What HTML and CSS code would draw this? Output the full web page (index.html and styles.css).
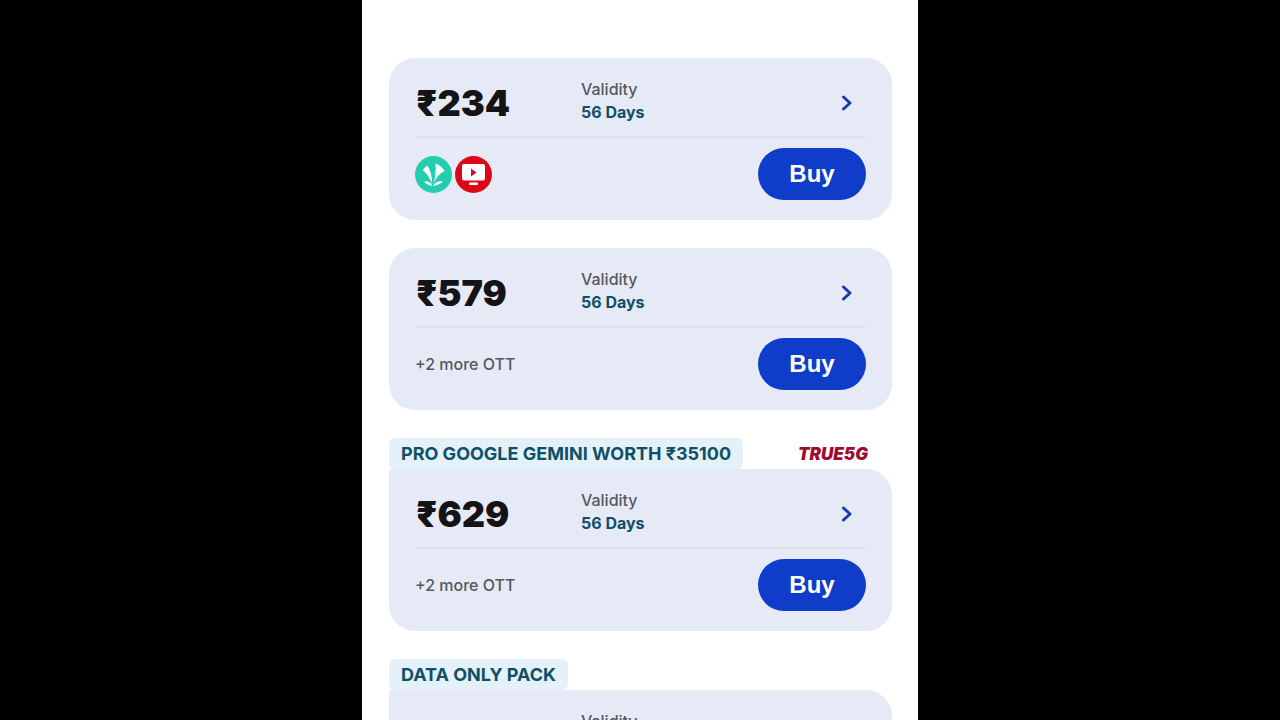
FILE: index.html
```html
<!DOCTYPE html>
<html lang="en">
<head>
    <meta charset="UTF-8">
    <meta name="viewport" content="width=device-width, initial-scale=1.0">
    <title>Recharge Plans</title>
    <link rel="stylesheet" href="styles.css">
</head>
<body>
    <main class="plans">
        <section class="plan">
            <div class="card">
                <div class="card-head">
                    <div class="price">₹234</div>
                    <div class="validity">
                        <div class="label">Validity</div>
                        <div class="value">56 Days</div>
                    </div>
                    <a class="details" href="#" aria-label="Plan details">
                        <svg width="12" height="16" viewBox="0 0 12 16"><path d="M2.5 2 9 8 2.5 14"/></svg>
                    </a>
                </div>
                <div class="card-foot">
                    <div class="apps">
                        <svg width="37" height="37" viewBox="0 0 37 37">
                            <circle cx="18.5" cy="18.5" r="18.5" fill="#24cdaf"/>
                            <g fill="#fff">
                                <path d="M12.5 9.5Q9.5 11 7.8 14Q14 19.5 17.2 28Q17 17 12.5 9.5Z"/>
                                <path d="M20.5 7.5Q26.5 9.5 29.5 15Q22 18.5 18.4 28Q21.5 17 20.5 7.5Z"/>
                                <path d="M9 25.5Q14.5 24.5 17.5 29.8Q12.5 29.5 9 25.5Z"/>
                                <path d="M28 25.5Q21.5 24.5 18 29.8Q24 29.5 28 25.5Z"/>
                            </g>
                        </svg>
                        <svg width="37" height="37" viewBox="0 0 37 37">
                            <circle cx="18.5" cy="18.5" r="18.5" fill="#df0717"/>
                            <rect x="7" y="8" width="23" height="16.5" rx="2" fill="#fff"/>
                            <path d="M16 12.5v8l5.5-4z" fill="#c5112b"/>
                            <rect x="14" y="26.5" width="9" height="2.5" rx="1" fill="#fff"/>
                        </svg>
                    </div>
                    <button class="buy" type="button">Buy</button>
                </div>
            </div>
        </section>

        <section class="plan">
            <div class="card">
                <div class="card-head">
                    <div class="price">₹579</div>
                    <div class="validity">
                        <div class="label">Validity</div>
                        <div class="value">56 Days</div>
                    </div>
                    <a class="details" href="#" aria-label="Plan details">
                        <svg width="12" height="16" viewBox="0 0 12 16"><path d="M2.5 2 9 8 2.5 14"/></svg>
                    </a>
                </div>
                <div class="card-foot">
                    <div class="label">+2 more OTT</div>
                    <button class="buy" type="button">Buy</button>
                </div>
            </div>
        </section>

        <section class="plan tagged">
            <div class="tags">
                <span class="tag">PRO GOOGLE GEMINI WORTH ₹35100</span>
                <span class="true5g">TRUE5G</span>
            </div>
            <div class="card">
                <div class="card-head">
                    <div class="price">₹629</div>
                    <div class="validity">
                        <div class="label">Validity</div>
                        <div class="value">56 Days</div>
                    </div>
                    <a class="details" href="#" aria-label="Plan details">
                        <svg width="12" height="16" viewBox="0 0 12 16"><path d="M2.5 2 9 8 2.5 14"/></svg>
                    </a>
                </div>
                <div class="card-foot">
                    <div class="label">+2 more OTT</div>
                    <button class="buy" type="button">Buy</button>
                </div>
            </div>
        </section>

        <section class="plan tagged">
            <div class="tags">
                <span class="tag">DATA ONLY PACK</span>
            </div>
            <div class="card">
                <div class="card-head">
                    <div class="price"></div>
                    <div class="validity">
                        <div class="label">Validity</div>
                    </div>
                </div>
            </div>
        </section>
    </main>
</body>
</html>
```
FILE: styles.css
```css
* {
    box-sizing: border-box;
}
body {
    margin: 0;
    background-color: #000;
    font-family: Inter, "Liberation Sans", Arial, sans-serif;
    color: #141414;
}
.plans {
    max-width: 556px;
    height: 100vh;
    margin: 0 auto;
    padding: 58px 26px 0 27px;
    background-color: #fff;
    display: flex;
    flex-direction: column;
    gap: 28px;
    overflow: auto;
    scrollbar-width: none;
}
.plan {
    flex-shrink: 0;
}
.card {
    padding: 0 26px;
    background-color: #e6eaf7;
    border-radius: 26px;
}
.tagged .card {
    border-top-left-radius: 4px;
}
.tags {
    display: flex;
    justify-content: space-between;
    align-items: center;
    padding-right: 24px;
}
.tag {
    padding: 0 12px;
    background-color: #e4f1f8;
    border-radius: 6px;
    color: #0f5068;
    font-size: 18px;
    font-weight: 700;
    line-height: 31px;
}
.true5g {
    color: #a00a30;
    font-size: 17px;
    font-style: italic;
    font-weight: 900;
    line-height: 30px;
}
.card-head {
    display: grid;
    grid-template-columns: 166px 1fr auto;
    align-items: start;
    height: 80px;
    padding-top: 20px;
    border-bottom: 2px solid #e0e1e8;
}
.price {
    padding-left: 1px;
    font-size: 36px;
    font-weight: 900;
    line-height: 50px;
}
.label {
    color: #57575f;
    font-size: 16px;
    font-weight: 500;
    line-height: 23px;
}
.value {
    color: #0f5068;
    font-size: 16px;
    font-weight: 700;
    line-height: 23px;
}
.details {
    display: flex;
    align-items: center;
    height: 50px;
    padding-right: 13px;
}
.details path {
    fill: none;
    stroke: #1a3cab;
    stroke-width: 3;
    stroke-linecap: round;
    stroke-linejoin: round;
}
.card-foot {
    display: flex;
    justify-content: space-between;
    align-items: center;
    padding: 10px 0 20px;
}
.apps {
    display: flex;
    gap: 3px;
}
.apps svg {
    display: block;
}
.buy {
    width: 108px;
    height: 52px;
    border: none;
    border-radius: 26px;
    background-color: #0f3cc9;
    color: #fff;
    font-family: "Liberation Sans", Arial, sans-serif;
    font-size: 24px;
    font-weight: bold;
    cursor: pointer;
}
```
